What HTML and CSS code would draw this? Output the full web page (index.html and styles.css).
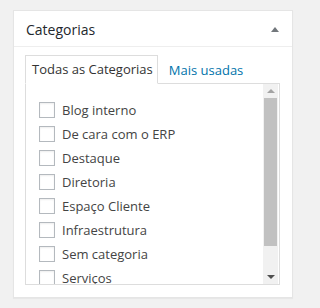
FILE: index.html
```html
<!DOCTYPE html>
<html lang="pt">
<head>
<meta charset="utf-8">
<link rel="stylesheet" href="styles.css">
</head>
<body>
<div class="page">
  <div class="postbox">
    <div class="hndle">
      <h2 class="title">Categorias</h2>
      <span class="toggle"></span>
    </div>
    <div class="inside">
      <ul class="tabs">
        <li class="tab active">Todas as Categorias</li>
        <li class="tab link">Mais usadas</li>
      </ul>
      <div class="panel">
        <ul class="list">
          <li class="item"><input type="checkbox" class="cb"><span>Blog interno</span></li>
          <li class="item"><input type="checkbox" class="cb"><span>De cara com o ERP</span></li>
          <li class="item"><input type="checkbox" class="cb"><span>Destaque</span></li>
          <li class="item"><input type="checkbox" class="cb"><span>Diretoria</span></li>
          <li class="item"><input type="checkbox" class="cb"><span>Espaço Cliente</span></li>
          <li class="item"><input type="checkbox" class="cb"><span>Infraestrutura</span></li>
          <li class="item"><input type="checkbox" class="cb"><span>Sem categoria</span></li>
          <li class="item"><input type="checkbox" class="cb"><span>Serviços</span></li>
        </ul>
        <div class="scrollbar">
          <div class="sb-btn"><span class="arr-up"></span></div>
          <div class="sb-thumb"></div>
          <div class="sb-track"></div>
          <div class="sb-btn"><span class="arr-down"></span></div>
        </div>
      </div>
    </div>
  </div>
</div>
</body>
</html>
```

FILE: styles.css
```css
* { box-sizing: border-box; }
html, body {
  margin: 0;
  padding: 0;
  background: #f1f1f1;
  font-family: "Open Sans", "Noto Sans", sans-serif;
  color: #444;
}
.page {
  padding: 10px 1px 12px 13px;
}
.postbox {
  width: 280px;
  background: #fff;
  border: 1px solid #e5e5e5;
  box-shadow: 0 1px 1px rgba(0,0,0,0.04);
}
.hndle {
  height: 36px;
  display: flex;
  align-items: center;
  justify-content: space-between;
  padding: 2px 12px 0 12px;
  border-bottom: 1px solid #eee;
}
.title {
  margin: 0;
  font-size: 14px;
  font-weight: 400;
  color: #23282d;
  line-height: 1;
}
.toggle {
  width: 0;
  height: 0;
  border-left: 4px solid transparent;
  border-right: 4px solid transparent;
  border-bottom: 5px solid #72777c;
  margin-right: 1px;
  margin-top: 0;
}
.inside {
  padding: 8px 12px 12px 11px;
}
.tabs {
  list-style: none;
  margin: 0;
  padding: 0;
  display: flex;
  align-items: flex-end;
  gap: 5px;
  position: relative;
  z-index: 1;
  margin-bottom: -1px;
}
.tab {
  font-size: 13px;
  line-height: 18px;
  padding: 4px 4px 5px 6px;
}
.tab.active {
  border: 1px solid #ddd;
  border-bottom: 1px solid #fff;
  background: #fff;
  color: #333;
}
.tab.link {
  color: #0073aa;
}
.panel {
  height: 202px;
  border: 1px solid #ddd;
  display: flex;
  overflow: hidden;
}
.list {
  flex: 1;
  list-style: none;
  margin: 0;
  padding: 14px 0 0 13px;
}
.item {
  height: 24px;
  display: flex;
  align-items: center;
  font-size: 13px;
  color: #444;
}
.cb {
  appearance: none;
  -webkit-appearance: none;
  width: 16px;
  height: 16px;
  margin: 0 7px 0 0;
  border: 1px solid #b4b9be;
  background: #fff;
  box-shadow: inset 0 1px 2px rgba(0,0,0,0.07);
  flex: none;
}
.scrollbar {
  width: 15px;
  margin-right: 1px;
  display: flex;
  flex-direction: column;
  background: #f1f1f1;
}
.sb-btn {
  height: 14px;
  display: flex;
  align-items: center;
  justify-content: center;
}
.arr-up {
  width: 0; height: 0;
  border-left: 4px solid transparent;
  border-right: 4px solid transparent;
  border-bottom: 4px solid #a3a3a3;
}
.arr-down {
  width: 0; height: 0;
  border-left: 4px solid transparent;
  border-right: 4px solid transparent;
  border-top: 4px solid #505050;
}
.sb-thumb {
  height: 148px;
  margin: 0 1px;
  background: #c1c1c1;
}
.sb-track {
  flex: 1;
}
```
